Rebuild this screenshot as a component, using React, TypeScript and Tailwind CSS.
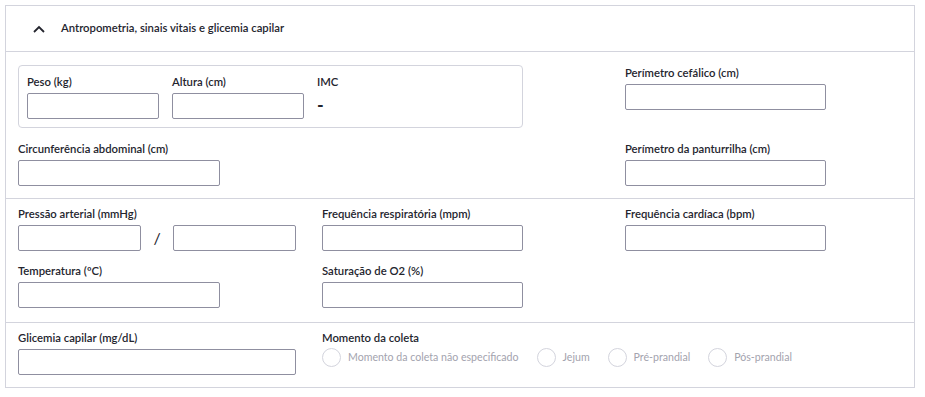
import React from "react";

function Field({ label, width = "w-[202px]" }: { label: string; width?: string }) {
  return (
    <div className="flex flex-col">
      <label className="text-[11.3px] leading-4 font-semibold text-[#24252e] mb-[3px]">{label}</label>
      <input className={`${width} h-[26px] border border-[#8f8fa0] rounded-[2px] bg-white`} />
    </div>
  );
}

function Radio({ label }: { label: string }) {
  return (
    <div className="flex items-center gap-[7px]">
      <span className="w-[19px] h-[19px] rounded-full border border-[#d3d4dd] bg-white" />
      <span className="text-[10.6px] text-[#a3a3ae]">{label}</span>
    </div>
  );
}

export default function App() {
  return (
    <div className="w-[925px] h-[397px] bg-white pt-[5px] pl-[5px] font-['Lato',sans-serif]">
      <div className="w-[910px] border border-[#d3d4dd]">
        <div className="h-[46px] flex items-center border-b border-[#d3d4dd]">
          <svg className="ml-[27px]" width="12" height="8" viewBox="0 0 12 8">
            <polyline points="1,7 6,2 11,7" fill="none" stroke="#24252e" strokeWidth="1.8" />
          </svg>
          <span className="ml-[16px] text-[11.3px] font-semibold text-[#24252e]">
            Antropometria, sinais vitais e glicemia capilar
          </span>
        </div>

        <div className="grid grid-cols-[304px_303px_1fr] px-3 pt-[13px] pb-3 gap-y-[13px]">
          <div className="col-span-2">
            <div className="w-[505px] h-[63px] border border-[#d3d4dd] rounded-[4px] flex pl-2 pt-2 gap-[13px]">
              <Field label="Peso (kg)" width="w-[132px]" />
              <Field label="Altura (cm)" width="w-[132px]" />
              <div className="flex flex-col">
                <span className="text-[11.3px] leading-4 font-semibold text-[#24252e]">IMC</span>
                <span className="text-[18px] leading-6 font-bold text-[#24252e] mt-[3px]">-</span>
              </div>
            </div>
          </div>
          <Field label="Perímetro cefálico (cm)" width="w-[201px]" />
          <div className="col-span-2">
            <Field label="Circunferência abdominal (cm)" />
          </div>
          <Field label="Perímetro da panturrilha (cm)" width="w-[201px]" />
        </div>

        <div className="grid grid-cols-[304px_303px_1fr] px-3 pt-[7px] pb-[14px] gap-y-3 border-t border-[#d3d4dd]">
          <div className="flex flex-col">
            <label className="text-[11.3px] leading-4 font-semibold text-[#24252e] mb-[3px]">Pressão arterial (mmHg)</label>
            <div className="flex items-center">
              <input className="w-[123px] h-[26px] border border-[#8f8fa0] rounded-[2px]" />
              <span className="w-[32px] text-center text-[16px] text-[#24252e]">/</span>
              <input className="w-[123px] h-[26px] border border-[#8f8fa0] rounded-[2px]" />
            </div>
          </div>
          <Field label="Frequência respiratória (mpm)" width="w-[201px]" />
          <Field label="Frequência cardíaca (bpm)" width="w-[201px]" />
          <Field label="Temperatura (ºC)" />
          <Field label="Saturação de O2 (%)" width="w-[201px]" />
        </div>

        <div className="grid grid-cols-[304px_1fr] px-3 pt-[7px] pb-3 border-t border-[#d3d4dd]">
          <Field label="Glicemia capilar (mg/dL)" width="w-[278px]" />
          <div className="flex flex-col">
            <label className="text-[11.3px] leading-4 font-semibold text-[#24252e] mb-[2px]">Momento da coleta</label>
            <div className="flex items-center gap-[18px]">
              <Radio label="Momento da coleta não especificado" />
              <Radio label="Jejum" />
              <Radio label="Pré-prandial" />
              <Radio label="Pós-prandial" />
            </div>
          </div>
        </div>
      </div>
    </div>
  );
}
